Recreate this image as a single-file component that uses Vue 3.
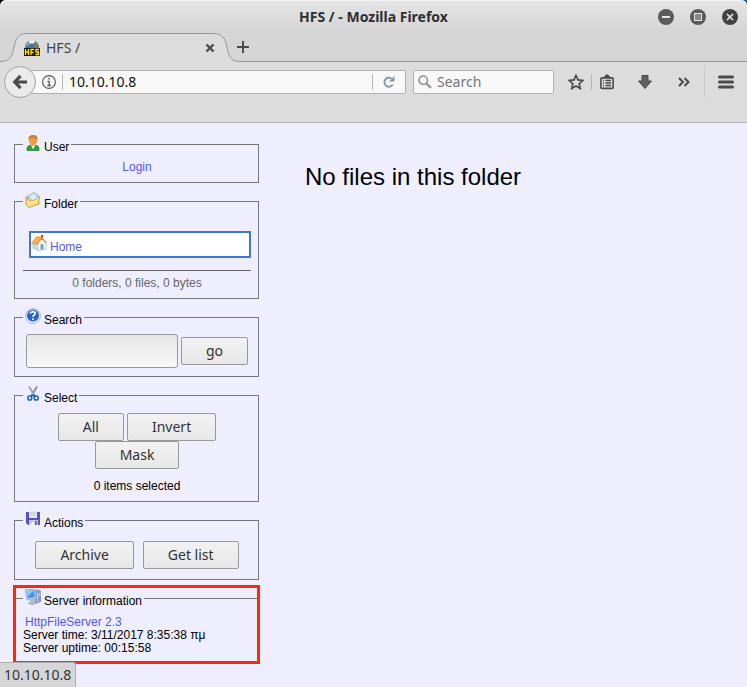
<script setup>
import { ref } from 'vue'

const address = ref('10.10.10.8')
const webQuery = ref('')
const fileQuery = ref('')
</script>

<template>
  <div class="window">
    <header class="chrome">
      <div class="top">
        <div class="titlebar">
          <span class="title">HFS / - Mozilla Firefox</span>
          <div class="controls">
            <button type="button" aria-label="Minimize">
              <svg width="16" height="16" viewBox="0 0 16 16"><circle cx="8" cy="8" r="8" fill="#5b5b5b" /><path d="M4 8h8" stroke="#e6e6e6" stroke-width="2" /></svg>
            </button>
            <button type="button" aria-label="Maximize">
              <svg width="16" height="16" viewBox="0 0 16 16"><circle cx="8" cy="8" r="8" fill="#5b5b5b" /><rect x="4.500" y="4.500" width="7" height="7" fill="#888" stroke="#e6e6e6" /></svg>
            </button>
            <button type="button" aria-label="Close">
              <svg width="16" height="16" viewBox="0 0 16 16"><circle cx="8" cy="8" r="8" fill="#424242" /><path d="M5 5l6 6M11 5l-6 6" stroke="#e6e6e6" stroke-width="1.700" /></svg>
            </button>
          </div>
        </div>
        <div class="tabs">
          <div class="tab">
            <svg class="tab-shape" width="240" height="30" viewBox="0 0 240 30">
              <path d="M0 28.500C11 28.500 12 23 14 14C16 5 18 .5 27 .5H213C222 .5 225 5 227 14C229 23 230 28.500 240 28.500V30H0Z" fill="#dcdcdc" />
              <path d="M0 28.500C11 28.500 12 23 14 14C16 5 18 .5 27 .5H213C222 .5 225 5 227 14C229 23 230 28.500 240 28.500" fill="none" stroke="#92979c" />
            </svg>
            <svg class="favicon" width="16" height="16" viewBox="0 0 16 16">
              <circle cx="8" cy="7.500" r="7" fill="#3978b8" />
              <path d="M2 4Q5 0 9 1L6 4L5 5L2 7L1 8Z" fill="#8aa09a" />
              <path d="M9 2Q14 2 15 7L12 9L10 6L11 4Z" fill="#8b7656" />
              <path d="M5 1L9 0L11 2L9 4L8 3L6 4Z" fill="#f2f5f7" />
              <rect y="8" width="16" height="8" fill="#201600" />
              <path d="M1.500 9v6M4.500 9v6M1.500 12h3M7 15v-5.500h3M7 12.500h2.500M15 9.500h-3v2.500h2.500v2.500H11.500" fill="none" stroke="#ffe81a" stroke-width="1.300" />
            </svg>
            <span class="tab-title">HFS /</span>
            <button type="button" class="tab-close" aria-label="Close tab">
              <svg width="10" height="10" viewBox="0 0 10 10"><path d="M1.500 1.500l7 7M8.500 1.500l-7 7" stroke="#4c4c4c" stroke-width="2.400" /></svg>
            </button>
          </div>
          <div class="strip">
            <button type="button" aria-label="New tab">
              <svg width="12" height="12" viewBox="0 0 12 12"><path d="M6 0v12M0 6h12" stroke="#4c4c4c" stroke-width="2" /></svg>
            </button>
          </div>
        </div>
      </div>

      <div class="toolbar">
        <button type="button" class="back" aria-label="Back">
          <svg width="16" height="16" viewBox="0 0 16 16"><path d="M8.500 1.800L2.800 8L8.500 14.200M3 8H15" fill="none" stroke="#4b4b4b" stroke-width="3.200" /></svg>
        </button>
        <div class="address">
          <svg width="14" height="14" viewBox="0 0 14 14"><circle cx="7" cy="7" r="6.400" fill="none" stroke="#555" stroke-width="1.100" /><path d="M7 2.800v1.800M5.500 6.300H7.200V10.500M5.300 10.500h3.600" fill="none" stroke="#555" stroke-width="1.300" /></svg>
          <i class="rule"></i>
          <input v-model="address" type="text" aria-label="Address">
          <i class="rule"></i>
          <button type="button" class="reload" aria-label="Reload">
            <svg width="12" height="12" viewBox="0 0 12 12"><path d="M9.800 8.500A4.500 4.500 0 1 1 8.500 2.500" fill="none" stroke="#8496a8" stroke-width="1.900" /><path d="M11.500 0v5.500H6Z" fill="#8496a8" /></svg>
          </button>
        </div>
        <div class="websearch">
          <svg width="14" height="14" viewBox="0 0 14 14"><circle cx="5.200" cy="5.200" r="4.200" fill="none" stroke="#959595" stroke-width="1.700" /><path d="M8.300 8.300L13 13" stroke="#959595" stroke-width="2.400" /></svg>
          <input v-model="webQuery" type="text" placeholder="Search" aria-label="Web search">
        </div>
        <div class="tools">
          <button type="button" aria-label="Bookmark">
            <svg width="16" height="16" viewBox="0 0 16 16"><path d="M8 1.500L10 5.900L14.800 6.400L11.200 9.700L12.200 14.500L8 12L3.800 14.500L4.800 9.700L1.200 6.400L6 5.900Z" fill="none" stroke="#4b4b4b" stroke-width="1.700" /></svg>
          </button>
          <i class="rule"></i>
          <button type="button" aria-label="Bookmarks list">
            <svg width="16" height="16" viewBox="0 0 16 16"><rect x="1.900" y="3.900" width="12.200" height="10.500" rx="1" fill="none" stroke="#4b4b4b" stroke-width="1.600" /><path d="M5 3.500L7 1H9L11 3.500Z" fill="#4b4b4b" stroke="#4b4b4b" /><path d="M4 6.500h1M6.500 6.500H12M4 9h1M6.500 9H12M4 11.500h1M6.500 11.500H12" stroke="#4b4b4b" stroke-width="1.300" /></svg>
          </button>
          <button type="button" class="download" aria-label="Downloads">
            <svg width="16" height="16" viewBox="0 0 16 16"><path d="M5 1.500h6v5.500h3.500L8 14.500L1.500 7H5Z" fill="#606060" stroke="#4b4b4b" /></svg>
          </button>
          <button type="button" class="more" aria-label="More tools">
            <svg width="12" height="10" viewBox="0 0 12 10"><path d="M1 1l4 4l-4 4M6.500 1l4 4l-4 4" fill="none" stroke="#4b4b4b" stroke-width="2" /></svg>
          </button>
          <i class="divider"></i>
          <button type="button" aria-label="Menu">
            <svg width="16" height="14" viewBox="0 0 16 14"><path d="M1.500 2h13M1.500 7h13M1.500 12h13" stroke="#4b4b4b" stroke-width="3" stroke-linecap="round" /></svg>
          </button>
        </div>
      </div>
    </header>

    <div class="page">
      <aside class="sidebar">
        <fieldset>
          <legend>
            <svg width="16" height="16" viewBox="0 0 16 16">
              <path d="M2 15.500V13.500Q2 10.500 6 10H10Q14 10.500 14 13.500V15.500Z" fill="#2ca33c" stroke="#1b7d27" stroke-width=".7" />
              <path d="M6 10L8 14.500L10.500 10Z" fill="#e9f7e9" />
              <path d="M3.800 4Q3.800 .3 8 .3T12.200 4Q12.200 9.500 8 11Q3.800 9.500 3.800 4Z" fill="#f29a41" />
              <path d="M3.500 5Q3 .2 8 .1Q13 .2 12.500 5Q11 2.500 8 2.800Q5 2.500 3.500 5Z" fill="#bd8048" />
            </svg>
            <span>User</span>
          </legend>
          <p class="login"><a href="#login">Login</a></p>
        </fieldset>

        <fieldset>
          <legend>
            <svg width="16" height="16" viewBox="0 0 16 16">
              <path d="M1 5L5 3.500L7 5L14 6V12L4 15.500L1 13Z" fill="#e8bd45" stroke="#b88b25" stroke-width=".6" />
              <path d="M3 4.500L8.500 .3L14.500 4L11 10L4 9Z" fill="#b4d8f5" stroke="#82afdc" stroke-width=".6" />
              <path d="M5 4.500L8.500 2L12 5L8 8Z" fill="#e1f2fd" />
              <path d="M1.200 6L5 9L10 8L14.800 4.500L12.800 12L4 15.500L1.500 13.500Z" fill="#f9e488" stroke="#c69b37" stroke-width=".6" />
            </svg>
            <span>Folder</span>
          </legend>
          <div class="crumb">
            <svg width="16" height="16" viewBox="0 0 16 16">
              <rect x="10" y="0" width="2.200" height="5" fill="#c23a2a" />
              <path d="M2 8L9 4L15 8V14L8 15.700L2 13Z" fill="#c3d8ea" stroke="#91adc4" stroke-width=".6" />
              <path d="M7 9L11 4.500L14.700 8.500V13.500L8 15.500Z" fill="#eff6fb" />
              <path d="M9.500 9.500L12.500 9V14L9.500 15Z" fill="#7f9fc0" />
              <path d="M.5 8.500L5 2L10.500 1.500L6 9.500L3 9Z" fill="#fbb24c" stroke="#e0892f" stroke-width=".6" />
              <path d="M6 9.500L10.500 2.500L15.500 8" fill="none" stroke="#e99338" stroke-width="1.200" />
            </svg>
            <a href="#home">Home</a>
          </div>
          <p class="counts">0 folders, 0 files, 0 bytes</p>
        </fieldset>

        <fieldset>
          <legend>
            <svg width="16" height="16" viewBox="0 0 16 16">
              <circle cx="8" cy="8" r="7.500" fill="#e2e7ef" stroke="#b3bccb" />
              <circle cx="8" cy="7.500" r="6" fill="#2862cf" />
              <path d="M3 6Q4 2.500 8 2.200Q11 2.300 12.500 4.500Q7 4 3 6Z" fill="#6493e5" />
              <path d="M5.800 5.500Q6 3.700 8 3.700Q10.200 3.800 10.200 5.500Q10.200 6.600 8.700 7.300Q8 7.800 8 9M8 10.300v1.700" fill="none" stroke="#fff" stroke-width="1.600" />
            </svg>
            <span>Search</span>
          </legend>
          <form class="search" @submit.prevent>
            <input v-model="fileQuery" type="text" aria-label="Search files">
            <button type="submit" class="btn">go</button>
          </form>
        </fieldset>

        <fieldset>
          <legend>
            <svg width="16" height="16" viewBox="0 0 16 16">
              <path d="M4 .5L9.500 10M12 .5L6.500 10" stroke="#8794a8" stroke-width="2" />
              <path d="M4 1L8 8.500" stroke="#c5ced9" stroke-width=".8" />
              <path d="M7.500 9L6 10.500M8.500 9L10 10.500" stroke="#1555b5" stroke-width="1.800" />
              <ellipse cx="4.800" cy="12" rx="2" ry="2.100" fill="#eef" stroke="#1760c5" stroke-width="1.500" />
              <ellipse cx="11.200" cy="12" rx="2" ry="2.100" fill="#eef" stroke="#1760c5" stroke-width="1.500" />
            </svg>
            <span>Select</span>
          </legend>
          <div class="select">
            <button type="button" class="btn">All</button>
            <button type="button" class="btn">Invert</button>
            <button type="button" class="btn">Mask</button>
          </div>
          <p class="selected">0 items selected</p>
        </fieldset>

        <fieldset>
          <legend>
            <svg width="16" height="16" viewBox="0 0 16 16">
              <path d="M1 1H15V14H3L1 12Z" fill="#5953bd" />
              <rect x="4" y="0" width="8" height="7" fill="#e4e6ee" />
              <path d="M5 2h6M5 4h6" stroke="#c6cad8" />
              <rect x="4" y="9" width="9" height="5" fill="#c3c6d6" />
              <path d="M5 14L9 9.500V14Z" fill="#f6f6fb" />
              <rect x="10" y="10" width="2" height="4" fill="#77739f" />
            </svg>
            <span>Actions</span>
          </legend>
          <div class="actions">
            <button type="button" class="btn">Archive</button>
            <button type="button" class="btn">Get list</button>
          </div>
        </fieldset>

        <div class="marked">
          <fieldset>
            <legend>
              <svg width="16" height="16" viewBox="0 0 16 16">
                <path d="M10 2L13 1L16 2.500V12L12.500 14L10 13Z" fill="#8a9ec4" stroke="#607aa9" stroke-width=".6" />
                <path d="M12.500 4v9M13 5l3-1M13 7l3-1" stroke="#d2dced" stroke-width=".8" />
                <path d="M0 1L10 0L11.500 9.500L2 11Z" fill="#c4daf0" stroke="#7598c3" stroke-width=".6" />
                <path d="M1.500 2L9 1.300L10 8.300L3 9.500Z" fill="#4598e8" />
                <path d="M1.500 2L9 1.300L3 7Z" fill="#8dc6f7" />
                <path d="M5 11L8 10.500L9 13L12 14L7 16L3 14L6 13Z" fill="#b3bfd0" stroke="#8796ad" stroke-width=".5" />
              </svg>
              <span>Server information</span>
            </legend>
            <div class="info">
              <p class="product"><a href="#hfs">HttpFileServer 2.3</a></p>
              <p>Server time: 3/11/2017 8:35:38 πμ</p>
              <p>Server uptime: 00:15:58</p>
            </div>
          </fieldset>
        </div>
      </aside>

      <main>
        <h1>No files in this folder</h1>
      </main>
    </div>

    <div class="status">10.10.10.8</div>
  </div>
</template>

<style>
html {
  background: #eeeeff;
}
</style>

<style scoped>
.window {
  min-height: 100vh;
  font: 12px/14px "Liberation Sans", Arial, sans-serif;
  color: #000;
}
p,
h1 {
  margin: 0;
  font-weight: normal;
}
svg {
  display: block;
  flex: none;
}
button,
input {
  margin: 0;
  padding: 0;
  border: 0;
  background: none;
  color: #333;
  font: 14px/20px "Noto Sans", sans-serif;
  outline: none;
}
a {
  color: #5555ff;
  text-decoration: none;
}

/* browser frame */
.chrome {
  background: linear-gradient(90deg, #000 50%, #12629a 50%);
  font-family: "Noto Sans", sans-serif;
}
.top {
  border-radius: 6px 6px 0 0;
  background: linear-gradient(#e5e5e5, #d5d5d5 32px);
  box-shadow: inset 0 1px #f5f5f5;
}
.titlebar {
  display: grid;
  grid-template-columns: 1fr auto 1fr;
  align-items: center;
  height: 33px;
  padding: 0 9px;
}
.title {
  grid-column: 2;
  color: #2f2f2f;
  font-size: 14px;
  font-weight: bold;
}
.controls {
  display: flex;
  justify-content: flex-end;
  gap: 16px;
}
.tabs {
  display: flex;
  height: 29px;
}
.tab {
  position: relative;
  display: flex;
  align-items: center;
  box-sizing: border-box;
  width: 240px;
  padding: 0 25px 0 24px;
}
.tab-shape {
  position: absolute;
  left: 0;
  top: 0;
}
.favicon,
.tab-title,
.tab-close {
  position: relative;
}
.tab-title {
  flex: 1;
  margin-left: 6px;
  color: #444;
  font-size: 14px;
}
.strip {
  display: flex;
  flex: 1;
  align-items: center;
  border-bottom: 1px solid #969696;
  box-sizing: border-box;
}
.strip button {
  margin-left: -3px;
  position: relative;
}
.toolbar {
  display: flex;
  align-items: flex-start;
  box-sizing: border-box;
  height: 61px;
  padding: 4px 13px 0 4px;
  border-bottom: 1px solid #b5b5b5;
  background: #dcdcdc;
}
.back {
  z-index: 1;
  display: grid;
  flex: none;
  place-items: center;
  box-sizing: border-box;
  width: 32px;
  height: 32px;
  border: 1px solid #a3a3a3;
  border-radius: 50%;
  background: #ebebeb;
}
.address,
.websearch {
  display: flex;
  align-items: center;
  box-sizing: border-box;
  height: 24px;
  margin-top: 4px;
  border: 1px solid #b0b0b0;
  border-radius: 2px;
  background: #f8f8f8;
}
.address {
  flex: 1;
  gap: 6px;
  margin-left: -5px;
  padding: 0 10px;
}
.address input {
  flex: 1;
  min-width: 0;
  color: #111;
}
.address .reload {
  margin-left: 4px;
}
.websearch {
  flex: none;
  width: 141px;
  gap: 5px;
  margin-left: 7px;
  padding: 0 4px;
}
.websearch input {
  width: 100%;
  min-width: 0;
}
.websearch input::placeholder {
  color: #777;
  opacity: 1;
}
.rule {
  width: 1px;
  height: 16px;
  background: #b5b5b5;
}
.tools {
  display: flex;
  align-items: center;
  height: 32px;
  margin-left: 14px;
}
.tools .rule {
  margin: 0 7px;
}
.tools .download {
  margin-left: 22px;
}
.tools .more {
  margin-left: 25px;
}
.divider {
  width: 1px;
  height: 32px;
  margin: 0 13px 0 14px;
  background: #c9c9c9;
}

/* file server page */
.page {
  display: flex;
  gap: 46px;
  padding: 11px 14px 22px;
}
.sidebar {
  display: flex;
  flex: none;
  flex-direction: column;
  gap: 8px;
  width: 245px;
}
fieldset {
  min-width: 0;
  margin: 0;
  padding: 0 7px 8px 8px;
  border: 1px solid #777;
}
legend {
  display: flex;
  gap: 3px;
  height: 20px;
  padding: 0 2px;
}
legend svg {
  margin-top: 1px;
}
legend span {
  align-self: flex-end;
}
.login {
  padding-top: 6px;
  text-align: center;
}
.crumb {
  display: flex;
  gap: 3px;
  height: 23px;
  margin: 20px 0 12px 6px;
  border: 2px solid #4477cc;
  background: #fff;
}
.crumb svg {
  margin-top: 2px;
}
.crumb a {
  align-self: flex-end;
  padding-bottom: 2px;
}
.counts {
  padding-top: 5px;
  border-top: 1px solid #666;
  color: #666;
  text-align: center;
}
.btn {
  box-sizing: border-box;
  height: 28px;
  padding: 0 24px;
  border: 1px solid #999;
  border-radius: 2px;
  background: linear-gradient(#f2f2f2, #e7e7e7);
}
.search {
  display: flex;
  align-items: center;
  gap: 3px;
  padding: 7px 3px 0;
}
.search input {
  flex: 1;
  box-sizing: border-box;
  min-width: 0;
  height: 34px;
  padding: 0 6px;
  border: 1px solid #999;
  border-radius: 3px;
  background: linear-gradient(#e6e6e6, #f8f8f8);
}
.select {
  display: flex;
  flex-wrap: wrap;
  justify-content: center;
  column-gap: 3px;
  padding: 8px 30px 10px;
}
.selected {
  text-align: center;
}
.actions {
  display: flex;
  justify-content: center;
  gap: 9px;
  padding: 11px 0 2px;
}
.marked {
  position: relative;
}
.marked::after {
  position: absolute;
  inset: -3px -1px 0;
  border: 3px solid #fa2a0a;
  content: "";
  pointer-events: none;
}
.info {
  padding-top: 8px;
  line-height: 13px;
}
.product {
  padding-left: 2px;
}
h1 {
  padding-top: 29px;
  font-size: 24px;
  line-height: 28px;
}
.status {
  position: fixed;
  bottom: 0;
  left: 0;
  box-sizing: border-box;
  height: 25px;
  padding: 2px 4px;
  border: solid #b0b0b0;
  border-width: 1px 1px 0 0;
  border-radius: 0 3px 0 0;
  background: #d6d6d6;
  color: #333;
  font: 14px/20px "Noto Sans", sans-serif;
}
</style>
